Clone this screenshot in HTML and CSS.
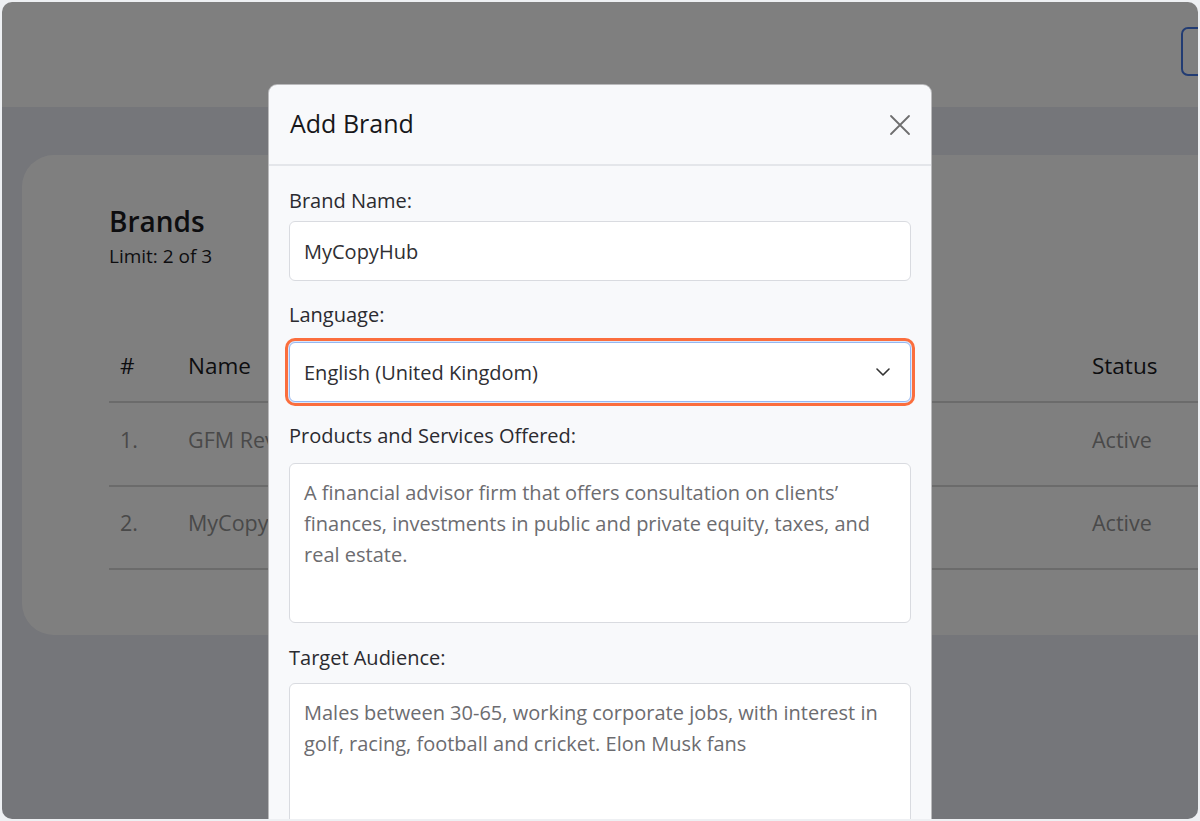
FILE: index.html
```html
<!DOCTYPE html>
<html lang="en">
<head>
    <meta charset="UTF-8">
    <meta name="viewport" content="width=device-width, initial-scale=1.0">
    <title>Brands - Add Brand</title>
    <link rel="stylesheet" href="styles.css">
</head>
<body>
    <div class="screen">
        <div class="page">
            <div class="topbar">
                <button class="top-btn" type="button" aria-label="Add Brand"></button>
            </div>
            <div class="main">
                <div class="card">
                    <h2 class="card-title">Brands</h2>
                    <p class="card-sub">Limit: 2 of 3</p>
                    <div class="table">
                        <div class="row head">
                            <div class="cell">#</div>
                            <div class="cell">Name</div>
                            <div class="cell">Status</div>
                        </div>
                        <div class="row">
                            <div class="cell">1.</div>
                            <div class="cell">GFM Reviews</div>
                            <div class="cell">Active</div>
                        </div>
                        <div class="row">
                            <div class="cell">2.</div>
                            <div class="cell">MyCopyHub</div>
                            <div class="cell">Active</div>
                        </div>
                    </div>
                </div>
            </div>
        </div>

        <!-- Modal over the page -->
        <div class="overlay">
            <div class="modal">
                <div class="modal-header">
                    <h3 class="modal-title">Add Brand</h3>
                    <button class="close-btn" type="button" aria-label="Close">
                        <svg width="22" height="22" viewBox="0 0 22 22">
                            <path d="M2 2 L20 20 M20 2 L2 20" stroke="#6e6e6e" stroke-width="1.8" fill="none" stroke-linecap="round"/>
                        </svg>
                    </button>
                </div>
                <div class="modal-body">
                    <div class="field">
                        <label class="field-label">Brand Name:</label>
                        <input class="field-input" type="text" value="MyCopyHub">
                    </div>
                    <div class="field">
                        <label class="field-label">Language:</label>
                        <div class="select focused">
                            <span>English (United Kingdom)</span>
                            <svg width="14" height="8" viewBox="0 0 14 8">
                                <path d="M1 1 L7 7 L13 1" stroke="#333" stroke-width="1.6" fill="none" stroke-linecap="round" stroke-linejoin="round"/>
                            </svg>
                        </div>
                    </div>
                    <div class="field">
                        <label class="field-label">Products and Services Offered:</label>
                        <textarea class="field-text">A financial advisor firm that offers consultation on clients’ finances, investments in public and private equity, taxes, and real estate.</textarea>
                    </div>
                    <div class="field">
                        <label class="field-label">Target Audience:</label>
                        <textarea class="field-text">Males between 30-65, working corporate jobs, with interest in golf, racing, football and cricket. Elon Musk fans</textarea>
                    </div>
                </div>
            </div>
        </div>
    </div>
</body>
</html>
```

FILE: styles.css
```css
/* Variables for styling */
:root {
    --frame: #eef0f3;
    --page-bg: #eaecf4;
    --white: #fff;
    --text: #1b1b1f;
    --muted: #939393;
    --line: #d6d6d6;
    --modal-bg: #f8f9fb;
    --input-border: #d9dbe0;
    --focus: #fb6e3d;
    --blue: #4479e6;
}

* {
    margin: 0;
    padding: 0;
    box-sizing: border-box;
}

body {
    font-family: "Open Sans", "Liberation Sans", sans-serif;
    background: var(--frame);
    padding: 2px;
    color: var(--text);
}

/* Browser frame */
.screen {
    width: 1196px;
    height: 817px;
    border-radius: 10px;
    overflow: hidden;
    position: relative;
    background: var(--page-bg);
}

.page {
    width: 1320px;
}

/* Header */
.topbar {
    height: 105px;
    background: var(--white);
    display: flex;
    justify-content: flex-end;
    align-items: flex-start;
    padding: 25px 21px 0 0;
}

.top-btn {
    width: 120px;
    height: 49px;
    border: 2px solid var(--blue);
    border-radius: 7px;
    background: var(--white);
}

/* Brands card */
.main {
    padding: 48px 20px 0 20px;
}

.card {
    background: var(--white);
    border-radius: 32px;
    padding: 50px 0 65px 87px;
}

.card-title {
    font-size: 28px;
    font-weight: 600;
    line-height: 32px;
}

.card-sub {
    font-size: 19px;
    line-height: 24px;
    margin-top: 7px;
}

.table {
    margin-top: 62px;
}

.row {
    display: grid;
    grid-template-columns: 68px 904px 1fr;
    border-bottom: 2px solid var(--line);
    height: 84px;
    align-items: center;
    padding-bottom: 10px;
    color: var(--muted);
    font-size: 21.5px;
}

.row:last-child {
    height: 83px;
}

.row.head {
    height: 73px;
    color: var(--text);
    font-size: 22.5px;
    padding-bottom: 0;
}

.cell {
    padding-left: 11px;
    white-space: nowrap;
}

/* Modal */
.overlay {
    position: absolute;
    inset: 0;
    background: rgba(0, 0, 0, 0.5);
    display: flex;
    justify-content: center;
    padding-top: 82px;
}

.modal {
    width: 664px;
    height: 900px;
    background: var(--modal-bg);
    border: 1px solid rgba(0, 0, 0, 0.25);
    border-radius: 9px;
}

.modal-header {
    height: 81px;
    border-bottom: 2px solid #e4e6ea;
    display: flex;
    justify-content: space-between;
    align-items: center;
    padding: 0 20px 0 21px;
}

.modal-title {
    font-size: 25px;
    font-weight: 500;
    color: #17171a;
    margin-top: -3px;
}

.close-btn {
    border: none;
    background: none;
    display: flex;
}

.modal-body {
    padding: 23px 20px 0 20px;
}

.field {
    margin-bottom: 22px;
}

.field:nth-child(3) {
    margin-bottom: 23px;
}

.field-label {
    display: block;
    font-size: 20px;
    line-height: 24px;
    color: #2b2b30;
    margin-bottom: 15px;
}

.field:first-child .field-label {
    margin-bottom: 8px;
}

.field:last-child .field-label {
    margin-bottom: 13px;
}

.field-input,
.select {
    width: 100%;
    height: 60px;
    border: 1px solid var(--input-border);
    border-radius: 6px;
    background: var(--white);
    padding: 0 14px;
    font-family: inherit;
    font-size: 20px;
    color: #2f2f33;
}

.select {
    display: flex;
    justify-content: space-between;
    align-items: center;
    padding-right: 20px;
}

.select.focused {
    border-color: #95b8f2;
    box-shadow: 0 0 0 1px #dbe7fc, 0 0 0 4px var(--focus);
}

.field-text {
    display: block;
    width: 100%;
    height: 160px;
    border: 1px solid var(--input-border);
    border-radius: 6px;
    background: var(--white);
    padding: 13px 14px;
    font-family: inherit;
    font-size: 20px;
    line-height: 31px;
    color: #6c6c70;
    resize: none;
}
```
